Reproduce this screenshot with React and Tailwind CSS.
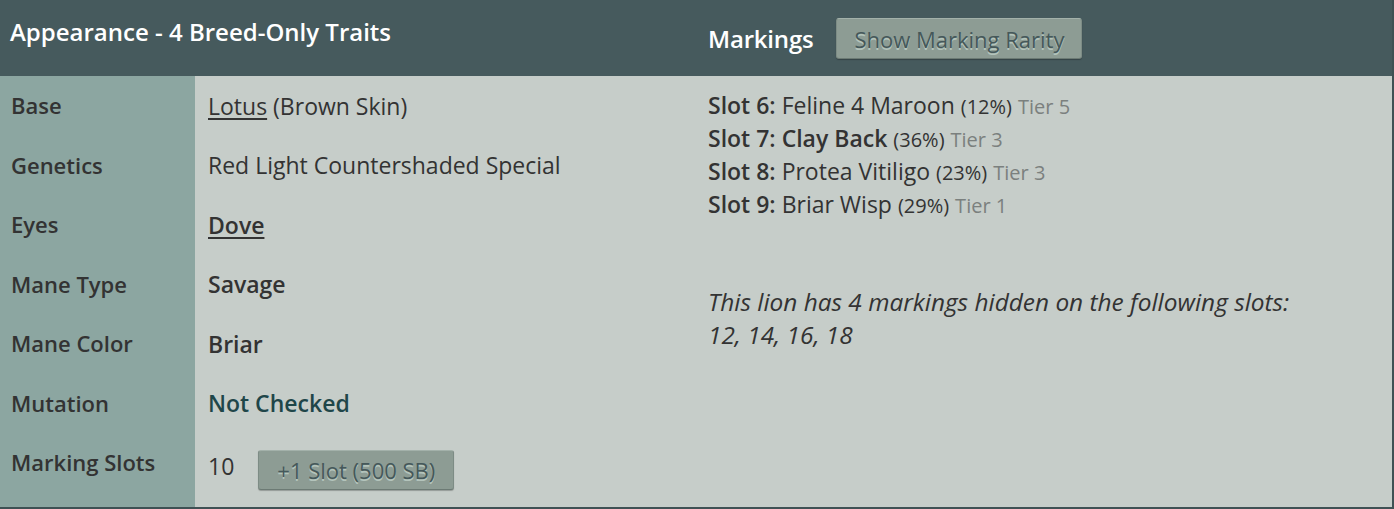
const rows = [
  { label: 'Base', value: <span><span className="underline underline-offset-[3px]">Lotus</span> (Brown Skin)</span> },
  { label: 'Genetics', value: 'Red Light Countershaded Special' },
  { label: 'Eyes', value: <span className="font-semibold underline underline-offset-[3px]">Dove</span> },
  { label: 'Mane Type', value: <span className="font-semibold">Savage</span> },
  { label: 'Mane Color', value: <span className="font-semibold">Briar</span> },
  { label: 'Mutation', value: <span className="font-semibold text-[#1f4649]">Not Checked</span> },
];

const markings = [
  { slot: 6, name: 'Feline 4 Maroon', pct: '12%', tier: 5 },
  { slot: 7, name: 'Clay Back', pct: '36%', tier: 3, bold: true },
  { slot: 8, name: 'Protea Vitiligo', pct: '23%', tier: 3 },
  { slot: 9, name: 'Briar Wisp', pct: '29%', tier: 1 },
];

const btn =
  'rounded-[3px] border border-[#7d8c85] border-t-[#a3b1aa] border-b-[#6c7a74] bg-[#8d9c94] text-[#45585a] [text-shadow:0_2px_0_#b4c4bc] shadow-[0_1px_1px_rgba(0,0,0,0.25)]';

export default function App() {
  return (
    <div className="w-[1394px] h-[509px] overflow-hidden font-['Open_Sans',sans-serif] text-[#333] border-r-2 border-b-2 border-[#3f5154]">
      <div className="grid grid-cols-2 h-[76px] bg-[#465a5d] text-white">
        <div className="pl-[10px] pt-[14px] text-[24px] font-semibold">
          Appearance - 4 Breed-Only Traits
        </div>
        <div className="flex items-center gap-[23px] pl-[12px] pt-px">
          <span className="text-[24px] font-semibold tracking-[-0.2px]">Markings</span>
          <button className={btn + ' h-[41px] w-[246px] text-[22px] leading-none'}>
            Show Marking Rarity
          </button>
        </div>
      </div>
      <div className="grid grid-cols-2 h-[431px] bg-[#c6cdc9]">
        <div className="flex">
          <div className="w-[195px] bg-[#8ca6a1] font-semibold text-[22px]">
            {rows.map((r) => (
              <div key={r.label} className="h-[59.5px] flex items-center pl-[11px]">
                {r.label}
              </div>
            ))}
            <div className="h-[59.5px] flex items-center pl-[11px]">Marking Slots</div>
          </div>
          <div className="flex-1 text-[23px]">
            {rows.map((r) => (
              <div key={r.label} className="h-[59.5px] flex items-center pl-[13px]">
                {r.value}
              </div>
            ))}
            <div className="h-[59.5px] flex items-start pl-[13px] gap-[24px]">
              <span className="mt-[18px] leading-[31px]">10</span>
              <button className={btn + ' h-[40px] w-[196px] text-[22px] leading-none mt-[17px]'}>
                +1 Slot (500 SB)
              </button>
            </div>
          </div>
        </div>
        <div className="pl-[12px] pt-[13px] text-[23px] leading-[33px]">
          {markings.map((m) => (
            <div key={m.slot}>
              <span className="font-semibold">Slot {m.slot}:</span>{' '}
              <span className={m.bold ? 'font-semibold' : ''}>{m.name}</span>{' '}
              <span className="text-[20px] leading-none">({m.pct})</span>{' '}
              <span className="text-[20px] leading-none text-[#7b807e]">Tier {m.tier}</span>
            </div>
          ))}
          <p className="mt-[64px] italic text-[24.4px] w-[610px]">
            This lion has 4 markings hidden on the following slots: 12, 14, 16, 18
          </p>
        </div>
      </div>
    </div>
  );
}
